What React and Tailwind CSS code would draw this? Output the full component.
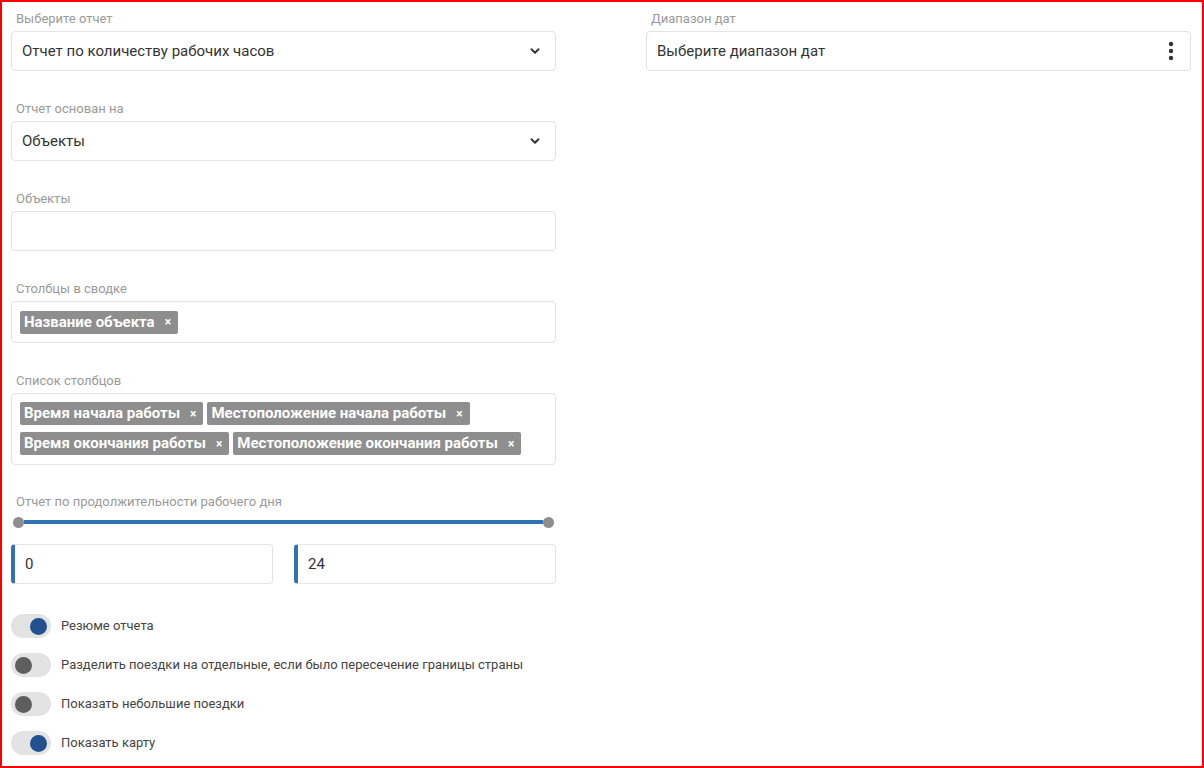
import React from 'react';

const Label = ({ children }) => (
  <div className="pl-[5px] text-[13px] leading-[16px] text-[#9a9a9a] mb-[4px]">{children}</div>
);

const Chevron = () => (
  <svg width="14" height="14" viewBox="0 0 24 24" fill="none" stroke="#333" strokeWidth="3.2" strokeLinecap="round" strokeLinejoin="round">
    <path d="M6 9l6 6 6-6" />
  </svg>
);

const Select = ({ value }) => (
  <div className="h-10 rounded border border-[#e3e3e3] flex items-center justify-between pl-[10px] pr-[13px] text-[15px] text-[#333]">
    <span>{value}</span>
    <Chevron />
  </div>
);

const Chip = ({ children }) => (
  <span className="inline-flex items-center h-[23px] bg-[#8e8e8e] text-white text-[15px] font-bold rounded-[2px] pl-[4px] pr-[7px]">
    {children}
    <span className="ml-[10px] text-[12px] leading-none">×</span>
  </span>
);

const Toggle = ({ on, label }) => (
  <div className="flex items-center h-[24px]">
    <div className={`w-[40px] h-[24px] shrink-0 rounded-full bg-[#e3e3e3] flex items-center px-[4px] ${on ? 'justify-end' : 'justify-start'}`}>
      <div className={`w-[17px] h-[17px] rounded-full ${on ? 'bg-[#22518f]' : 'bg-[#5e5e5e]'}`} />
    </div>
    <span className="ml-[10px] text-[13px] text-[#444]">{label}</span>
  </div>
);

const NumInput = ({ value }) => (
  <div className="h-10 flex-1 rounded border border-[#e3e3e3] border-l-4 border-l-[#2f73b3] flex items-center pl-[10px] text-[15px] text-[#333]">
    {value}
  </div>
);

export default function App() {
  return (
    <div
      className="w-[1204px] h-[768px] overflow-hidden border-2 border-[#ff0000] bg-white flex items-start pl-[9px] pt-[9px]"
      style={{ fontFamily: 'Roboto, "Noto Sans", sans-serif' }}
    >
      <div className="w-[545px]">
        <Label>Выберите отчет</Label>
        <Select value="Отчет по количеству рабочих часов" />

        <div className="mt-[30px]">
          <Label>Отчет основан на</Label>
          <Select value="Объекты" />
        </div>

        <div className="mt-[30px]">
          <Label>Объекты</Label>
          <div className="h-10 rounded border border-[#e3e3e3]" />
        </div>

        <div className="mt-[30px]">
          <Label>Столбцы в сводке</Label>
          <div className="h-[42px] rounded border border-[#e3e3e3] flex items-center px-[8px]">
            <Chip>Название объекта</Chip>
          </div>
        </div>

        <div className="mt-[30px]">
          <Label>Список столбцов</Label>
          <div className="h-[72px] rounded border border-[#e3e3e3] px-[8px] pt-[8px] flex flex-wrap gap-x-[4px] gap-y-[7px] content-start">
            <Chip>Время начала работы</Chip>
            <Chip>Местоположение начала работы</Chip>
            <Chip>Время окончания работы</Chip>
            <Chip>Местоположение окончания работы</Chip>
          </div>
        </div>

        <div className="mt-[29px]">
          <Label>Отчет по продолжительности рабочего дня</Label>
          <div className="flex items-center h-[12px] mt-[6px] px-[2px]">
            <div className="w-[11px] h-[11px] rounded-full bg-[#8e8e8e] shrink-0" />
            <div className="flex-1 h-[4px] bg-[#2f73b3]" />
            <div className="w-[11px] h-[11px] rounded-full bg-[#8e8e8e] shrink-0" />
          </div>
          <div className="flex gap-[21px] mt-[16px]">
            <NumInput value="0" />
            <NumInput value="24" />
          </div>
        </div>

        <div className="mt-[30px] flex flex-col gap-[15px]">
          <Toggle on label="Резюме отчета" />
          <Toggle label="Разделить поездки на отдельные, если было пересечение границы страны" />
          <Toggle label="Показать небольшие поездки" />
          <Toggle on label="Показать карту" />
        </div>
      </div>

      <div className="w-[545px] ml-[90px]">
        <Label>Диапазон дат</Label>
        <div className="h-10 rounded border border-[#e3e3e3] flex items-center justify-between pl-[10px] pr-[16px] text-[15px] text-[#333]">
          <span>Выберите диапазон дат</span>
          <svg width="6" height="20" viewBox="0 0 6 20" fill="#333">
            <circle cx="3" cy="3" r="2.2" />
            <circle cx="3" cy="10" r="2.2" />
            <circle cx="3" cy="17" r="2.2" />
          </svg>
        </div>
      </div>
    </div>
  );
}
